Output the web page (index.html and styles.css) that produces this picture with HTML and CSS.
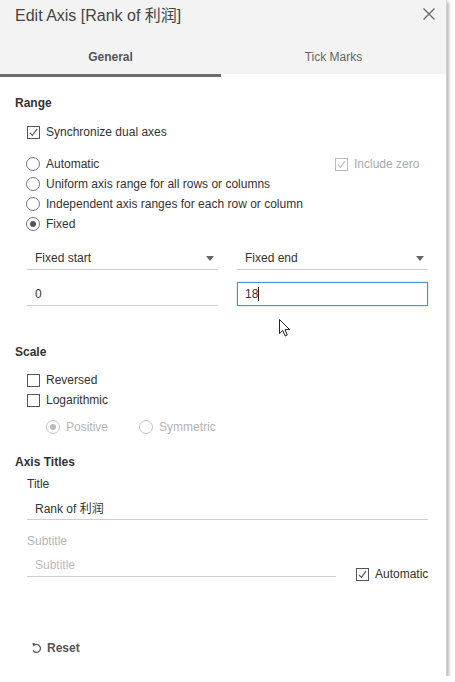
FILE: index.html
```html
<!DOCTYPE html>
<html>
<head>
<meta charset="utf-8">
<link rel="stylesheet" href="styles.css">
</head>
<body>
<div class="dialog">
  <div class="header">
    <div class="title">Edit Axis [Rank of 利润]</div>
    <svg class="close" width="12" height="12" viewBox="0 0 12 12"><path d="M0.5 0.5 L11.5 11.5 M11.5 0.5 L0.5 11.5" stroke="#666" stroke-width="1.3" fill="none"/></svg>
  </div>
  <div class="tabs">
    <div class="tab active">General</div>
    <div class="tab">Tick Marks</div>
  </div>
  <div class="body">
    <div class="section-label range-label">Range</div>
    <div class="row indent sync-row">
      <span class="checkbox checked"><svg width="11" height="11" viewBox="0 0 11 11"><path d="M2 5.8 L4.4 8.4 L9 2.2" stroke="#555" stroke-width="1.1" fill="none"/></svg></span>
      <span>Synchronize dual axes</span>
    </div>
    <div class="radio-group">
      <div class="row indent">
        <span class="radio"></span><span>Automatic</span>
        <span class="include-zero disabled"><span class="checkbox checked dis"><svg width="11" height="11" viewBox="0 0 11 11"><path d="M2 5.8 L4.4 8.4 L9 2.2" stroke="#bbb" stroke-width="1.1" fill="none"/></svg></span><span>Include zero</span></span>
      </div>
      <div class="row indent"><span class="radio"></span><span>Uniform axis range for all rows or columns</span></div>
      <div class="row indent"><span class="radio"></span><span>Independent axis ranges for each row or column</span></div>
      <div class="row indent"><span class="radio selected"></span><span>Fixed</span></div>
    </div>
    <div class="pair selects">
      <div class="field select"><span>Fixed start</span><span class="caret"></span></div>
      <div class="field select"><span>Fixed end</span><span class="caret"></span></div>
    </div>
    <div class="pair inputs">
      <div class="field input"><span>0</span></div>
      <div class="field input focused"><span>18</span><span class="text-cursor"></span></div>
      <svg class="pointer" width="14" height="20" viewBox="0 0 14 20"><path d="M1.5 1.5 L1.5 15.5 L4.8 12.5 L7.2 18 L9.3 17 L7 11.7 L11.5 11.5 Z" fill="#fff" stroke="#222" stroke-width="1" stroke-linejoin="round"/></svg>
    </div>

    <div class="section-label scale-label">Scale</div>
    <div class="row indent scale-first"><span class="checkbox"></span><span>Reversed</span></div>
    <div class="row indent"><span class="checkbox"></span><span>Logarithmic</span></div>
    <div class="row sub-radios disabled">
      <span class="radio selected dis"></span><span class="pos-text">Positive</span>
      <span class="radio dis"></span><span>Symmetric</span>
    </div>

    <div class="section-label axis-label">Axis Titles</div>
    <div class="field-label indent">Title</div>
    <div class="field input wide indent"><span>Rank of 利润</span></div>
    <div class="field-label indent disabled sub-label">Subtitle</div>
    <div class="subtitle-row indent">
      <div class="field input sub-input"><span class="placeholder">Subtitle</span></div>
      <div class="auto">
        <span class="checkbox checked"><svg width="11" height="11" viewBox="0 0 11 11"><path d="M2 5.8 L4.4 8.4 L9 2.2" stroke="#555" stroke-width="1.1" fill="none"/></svg></span>
        <span>Automatic</span>
      </div>
    </div>

    <div class="reset">
      <svg width="11" height="12" viewBox="0 0 11 12"><path d="M3 3.3 A4 4 0 1 1 2 8.5" stroke="#555" stroke-width="1.2" fill="none"/><path d="M1.2 1 L4.4 1.6 L2.6 4.6 Z" fill="#555"/></svg>
      <span>Reset</span>
    </div>
  </div>
</div>
</body>
</html>
```
FILE: styles.css
```css
html, body {
  margin: 0;
  padding: 0;
  background: #fff;
}
body {
  font-family: "Liberation Sans", Arial, "Noto Sans CJK SC", sans-serif;
  font-size: 12px;
  color: #333;
}
.dialog {
  width: 447px;
  height: 676px;
  background: #fff;
  box-shadow: 2px 2px 3px rgba(0, 0, 0, 0.28);
  border-right: 1px solid #d0d0d0;
  box-sizing: border-box;
  display: flex;
  flex-direction: column;
}
.header {
  height: 28px;
  background: #f3f3f3;
  display: flex;
  align-items: center;
  justify-content: space-between;
  padding: 0 11px 0 15px;
}
.title {
  font-size: 16px;
  color: #444;
  font-family: "Liberation Sans", Arial, "Noto Sans CJK SC", sans-serif;
}
.tabs {
  display: flex;
  background: #f3f3f3;
  height: 49px;
}
.tab {
  width: 221px;
  height: 49px;
  box-sizing: border-box;
  padding-top: 12px;
  display: flex;
  align-items: center;
  justify-content: center;
  color: #666;
  border-bottom: 3px solid #fff;
}
.tab.active {
  color: #555;
  font-weight: bold;
  border-bottom: 3px solid #6b6b6b;
}
.tab:last-child {
  flex: 1;
}
.body {
  padding: 0 15px;
  position: relative;
  flex: 1;
  display: flex;
  flex-direction: column;
}
.section-label {
  font-weight: bold;
  line-height: 16px;
  height: 16px;
  color: #333;
}
.range-label { margin-top: 18px; }
.scale-label { margin-top: 38px; }
.axis-label { margin-top: 17px; }
.row {
  display: flex;
  align-items: center;
  height: 20px;
}
.indent { margin-left: 12px; }
.sync-row { margin-top: 11px; }
.scale-first { margin-top: 10px; }
.radio-group { margin-top: 12px; }
.checkbox {
  width: 13px;
  height: 13px;
  box-sizing: border-box;
  border: 1px solid #555;
  margin-right: 6px;
  display: inline-flex;
  align-items: center;
  justify-content: center;
  background: #fff;
  flex: none;
}
.checkbox.dis { border-color: #bbb; }
.checkbox svg { display: block; }
.radio {
  width: 14px;
  height: 14px;
  box-sizing: border-box;
  border: 1px solid #777;
  border-radius: 50%;
  margin-left: -1px;
  margin-right: 6px;
  display: inline-flex;
  align-items: center;
  justify-content: center;
  flex: none;
}
.radio.selected::after {
  content: "";
  width: 6px;
  height: 6px;
  border-radius: 50%;
  background: #555;
}
.radio.dis { border-color: #c4c4c4; }
.radio.dis.selected::after { background: #bbb; }
.disabled { color: #b5b5b5; }
.include-zero {
  margin-left: auto;
  width: 85px;
  margin-right: 11px;
  display: flex;
  align-items: center;
  color: #aaa;
}
.pair {
  display: flex;
  gap: 19px;
  margin-left: 12px;
  position: relative;
}
.selects { margin-top: 12px; }
.inputs { margin-top: 12px; }
.field {
  height: 24px;
  box-sizing: border-box;
  border-bottom: 1px solid #cfcfcf;
  padding-left: 8px;
  display: flex;
  align-items: center;
}
.pair .field { width: 191px; }
.select {
  justify-content: space-between;
  padding-right: 4px;
}
.caret {
  width: 0;
  height: 0;
  border-left: 4px solid transparent;
  border-right: 4px solid transparent;
  border-top: 5px solid #666;
  margin-top: 1px;
}
.input.focused {
  border: 1px solid #3d95e0;
  box-shadow: 0 0 2px rgba(61, 149, 224, 0.45);
  padding-left: 7px;
}
.text-cursor {
  display: inline-block;
  width: 1px;
  height: 14px;
  background: #222;
}
.pointer {
  position: absolute;
  left: 251px;
  top: 36px;
}
.sub-radios {
  margin-left: 32px;
  margin-top: 7px;
}
.pos-text { margin-right: 32px; }
.field-label {
  line-height: 16px;
  height: 16px;
}
.axis-label + .field-label { margin-top: 6px; }
.wide {
  margin-top: 4px;
  width: 401px;
}
.sub-label { margin-top: 13px; }
.subtitle-row {
  margin-top: 4px;
  display: flex;
  align-items: flex-end;
}
.sub-input { width: 309px; }
.placeholder { color: #bbb; }
.auto {
  margin-left: 20px;
  display: flex;
  align-items: center;
  height: 20px;
  margin-bottom: -7px;
}
.reset {
  margin-top: auto;
  margin-bottom: 20px;
  margin-left: 16px;
  height: 16px;
  display: flex;
  align-items: center;
  gap: 5px;
  color: #555;
  font-weight: bold;
}
```
